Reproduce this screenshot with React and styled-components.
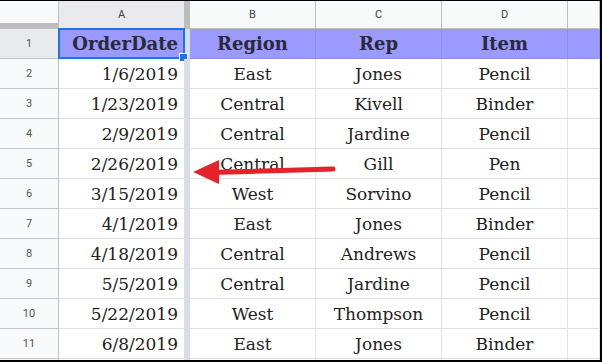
import React from "react";
import styled, { createGlobalStyle, css } from "styled-components";

const Global = createGlobalStyle`
  html, body { margin: 0; padding: 0; background: #fff; }
  * { box-sizing: border-box; }
`;

const Frame = styled.div`
  position: relative;
  width: 602px;
  height: 362px;
  border-top: 1px solid #000;
  border-right: 2px solid #000;
  border-bottom: 2px solid #000;
  overflow: hidden;
  background: #fff;
`;

const Grid = styled.div`
  display: grid;
  grid-template-columns: 59px 131px 126px 126px 126px 1fr;
  grid-auto-rows: 30px;
  grid-template-rows: 28px;
`;

const ColHead = styled.div`
  display: flex;
  align-items: center;
  justify-content: center;
  font-family: Roboto, "Noto Sans", sans-serif;
  font-size: 11px;
  color: #444;
  background: ${(p) => (p.$sel ? "#e8eaed" : "#f8f9fa")};
  border-bottom: 1px solid #c0c0c0;
  border-right: ${(p) => (p.$freeze ? "6px solid #bdbdbd" : "1px solid #c0c0c0")};
`;

const Corner = styled.div`
  background: #f8f9fa;
  border-right: 1px solid #c0c0c0;
  border-bottom: 1px solid #c0c0c0;
  box-shadow: inset 0 -5px 0 #bdbdbd;
`;

const RowHead = styled.div`
  display: flex;
  align-items: center;
  justify-content: center;
  font-family: Roboto, "Noto Sans", sans-serif;
  font-size: 11px;
  color: #555;
  background: ${(p) => (p.$sel ? "#e8eaed" : "#f8f9fa")};
  border-right: 1px solid #c0c0c0;
  border-bottom: 1px solid #c4c4c4;
`;

const Cell = styled.div`
  position: relative;
  display: flex;
  align-items: flex-end;
  justify-content: ${(p) => (p.$right ? "flex-end" : "center")};
  padding: 0 6px 4px 6px;
  font-family: "DejaVu Serif", "Liberation Serif", serif;
  font-size: 17px;
  color: #222;
  white-space: nowrap;
  border-bottom: 1px solid #e2e2e2;
  border-right: ${(p) => (p.$freeze ? "6px solid #d9dde6" : "1px solid #e2e2e2")};
  ${(p) =>
    p.$head &&
    css`
      background: #9a9aff;
      font-weight: bold;
      color: #2a2a3a;
      font-size: 18px;
      border-bottom-color: #8d8dee;
      border-right-color: ${p.$freeze ? "#d9dde6" : "#8d8dee"};
    `}
`;

const Selection = styled.div`
  position: absolute;
  left: -1px;
  top: -1px;
  right: -1px;
  bottom: -1px;
  border: 2px solid #1a73e8;
  pointer-events: none;
`;

const Handle = styled.div`
  position: absolute;
  right: -5px;
  bottom: -5px;
  width: 9px;
  height: 9px;
  background: #1a73e8;
  border: 1px solid #fff;
`;

const Arrow = styled.svg`
  position: absolute;
  left: 0;
  top: 0;
  pointer-events: none;
`;

const rows = [
  ["1/6/2019", "East", "Jones", "Pencil"],
  ["1/23/2019", "Central", "Kivell", "Binder"],
  ["2/9/2019", "Central", "Jardine", "Pencil"],
  ["2/26/2019", "Central", "Gill", "Pen"],
  ["3/15/2019", "West", "Sorvino", "Pencil"],
  ["4/1/2019", "East", "Jones", "Binder"],
  ["4/18/2019", "Central", "Andrews", "Pencil"],
  ["5/5/2019", "Central", "Jardine", "Pencil"],
  ["5/22/2019", "West", "Thompson", "Pencil"],
  ["6/8/2019", "East", "Jones", "Binder"],
];

export default function App() {
  return (
    <>
      <Global />
      <Frame>
        <Grid>
          <Corner />
          <ColHead $sel $freeze>A</ColHead>
          <ColHead>B</ColHead>
          <ColHead>C</ColHead>
          <ColHead>D</ColHead>
          <ColHead />

          <RowHead $sel>1</RowHead>
          <Cell $head $freeze $right>
            OrderDate
            <Selection>
              <Handle />
            </Selection>
          </Cell>
          <Cell $head>Region</Cell>
          <Cell $head>Rep</Cell>
          <Cell $head>Item</Cell>
          <Cell $head />

          {rows.map((r, i) => (
            <React.Fragment key={i}>
              <RowHead>{i + 2}</RowHead>
              <Cell $freeze $right>{r[0]}</Cell>
              <Cell>{r[1]}</Cell>
              <Cell>{r[2]}</Cell>
              <Cell>{r[3]}</Cell>
              <Cell />
            </React.Fragment>
          ))}
          <RowHead />
          <Cell $freeze />
          <Cell />
          <Cell />
          <Cell />
          <Cell />
        </Grid>
        <Arrow width="602" height="362" viewBox="0 0 602 362">
          <line x1="333" y1="168" x2="212" y2="171.5" stroke="#e52129" strokeWidth="5" strokeLinecap="round" />
          <polygon points="193,171 219,159 219,183" fill="#e52129" />
        </Arrow>
      </Frame>
    </>
  );
}
